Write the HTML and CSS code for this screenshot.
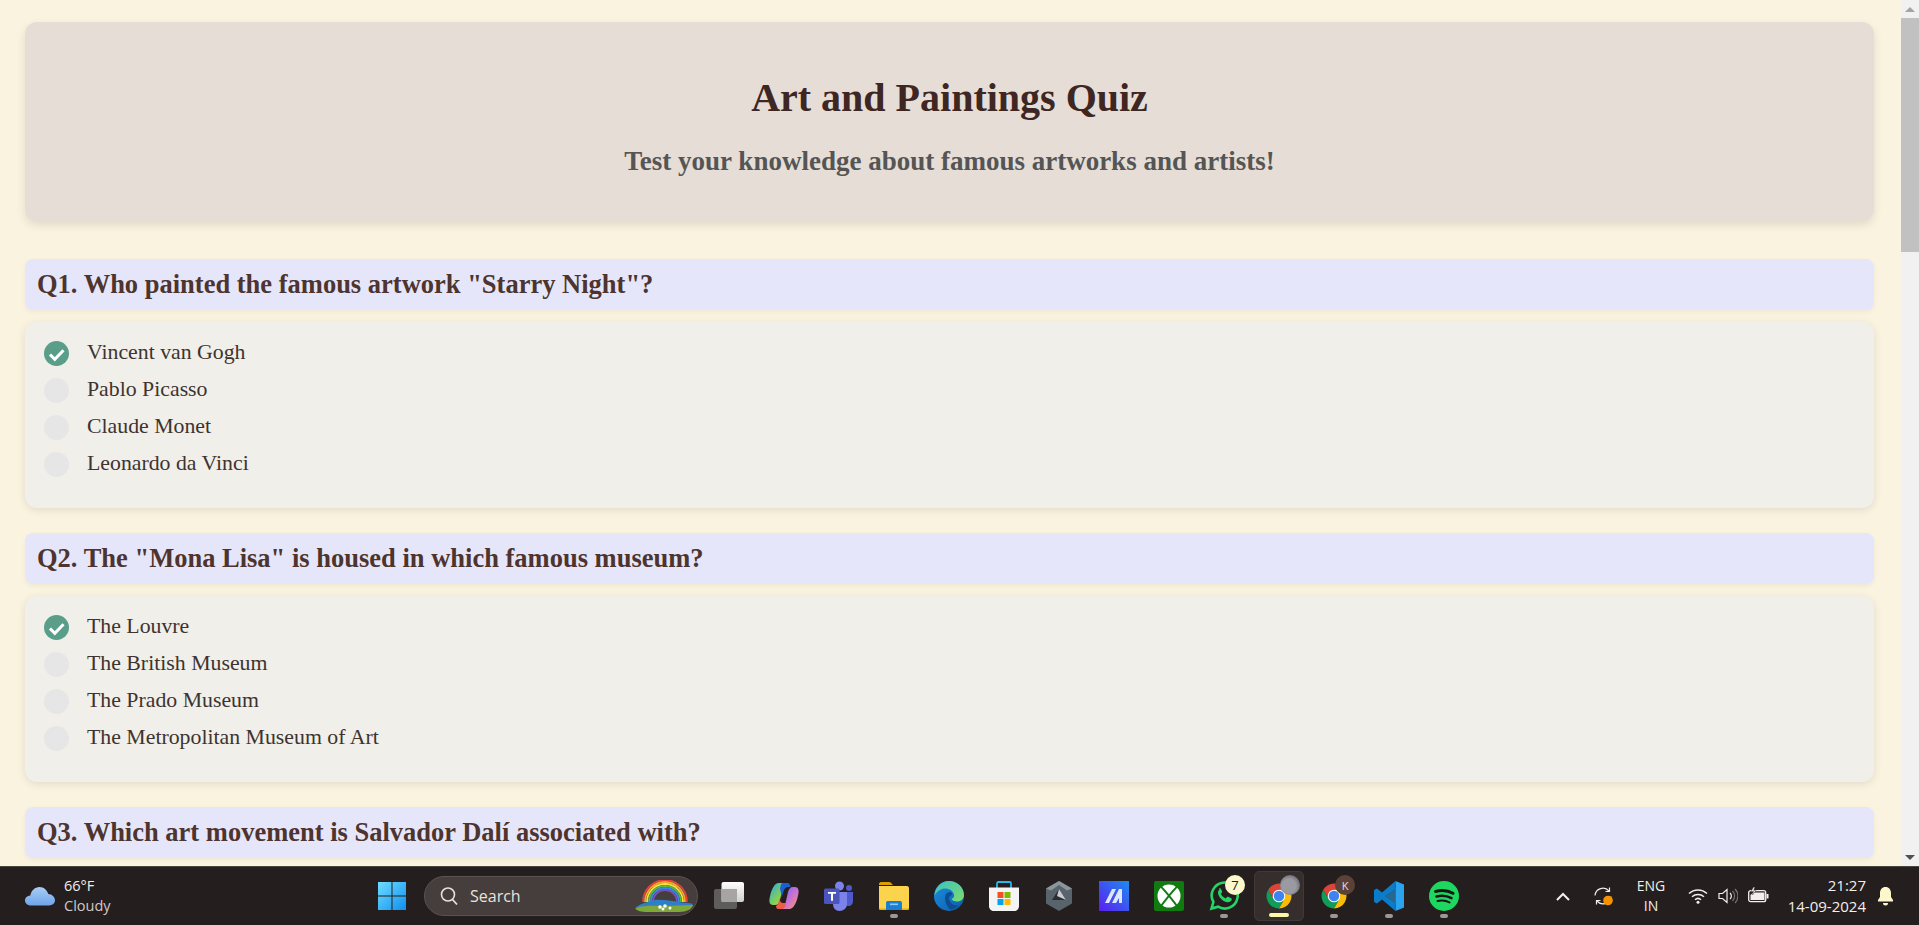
FILE: index.html
```html
<!DOCTYPE html>
<html lang="en">
<head>
    <meta charset="UTF-8">
    <meta name="viewport" content="width=device-width, initial-scale=1.0">
    <title>Art and Paintings Quiz</title>
    <link rel="stylesheet" href="styles.css">
</head>
<body>
    <svg class="defs" width="0" height="0">
        <symbol id="chrome" viewBox="0 0 48 48">
            <circle cx="24" cy="24" r="11" fill="#fff"/>
            <path fill="#db4437" d="M6.68 14A20 20 0 0 1 41.32 14H24A10 10 0 0 0 15.34 29Z"/>
            <path fill="#0f9d58" d="M6.68 14L15.34 29A10 10 0 0 0 32.66 29L24 44A20 20 0 0 1 6.68 14Z"/>
            <path fill="#fbbc05" d="M41.32 14H24A10 10 0 0 1 32.66 29L24 44A20 20 0 0 0 41.32 14Z"/>
            <circle cx="24" cy="24" r="8.4" fill="#3f83f1"/>
        </symbol>
    </svg>

    <div class="window">
        <main class="page">
            <header class="quiz-header">
                <h1>Art and Paintings Quiz</h1>
                <p>Test your knowledge about famous artworks and artists!</p>
            </header>

            <section class="question">
                <h2>Q1. Who painted the famous artwork "Starry Night"?</h2>
                <ul class="options">
                    <li><span class="radio checked"><svg viewBox="0 0 25 25"><path d="M6 13.500l4.800 4.800 8.700-9" fill="none" stroke="#fff" stroke-width="3"/></svg></span>Vincent van Gogh</li>
                    <li><span class="radio"></span>Pablo Picasso</li>
                    <li><span class="radio"></span>Claude Monet</li>
                    <li><span class="radio"></span>Leonardo da Vinci</li>
                </ul>
            </section>

            <section class="question">
                <h2>Q2. The "Mona Lisa" is housed in which famous museum?</h2>
                <ul class="options">
                    <li><span class="radio checked"><svg viewBox="0 0 25 25"><path d="M6 13.500l4.800 4.800 8.700-9" fill="none" stroke="#fff" stroke-width="3"/></svg></span>The Louvre</li>
                    <li><span class="radio"></span>The British Museum</li>
                    <li><span class="radio"></span>The Prado Museum</li>
                    <li><span class="radio"></span>The Metropolitan Museum of Art</li>
                </ul>
            </section>

            <section class="question">
                <h2>Q3. Which art movement is Salvador Dalí associated with?</h2>
            </section>
        </main>

        <div class="scrollbar">
            <span class="arrow up"></span>
            <span class="thumb"></span>
            <span class="track"></span>
            <span class="arrow down"></span>
        </div>
    </div>

    <footer class="taskbar">
        <div class="weather">
            <svg class="cloud" viewBox="0 0 30 20">
                <defs><linearGradient id="cloudFill" x1="0" y1="0" x2="0" y2="1"><stop offset="0" stop-color="#a9cdf6"/><stop offset="1" stop-color="#6ea4e8"/></linearGradient></defs>
                <path fill="url(#cloudFill)" d="M6 19.5C2.500 19.500 0 17.300 0 14.500 0 11.700 2.300 9.600 5.300 9.500 6.300 4.500 10 1 14.500 1 18.700 1 22 3.800 23.300 8 27 8.200 30 11 30 14.300 30 17.300 27.500 19.500 24 19.500Z"/>
            </svg>
            <div class="weather-text">
                <span>66°F</span>
                <span class="dim">Cloudy</span>
            </div>
        </div>

        <div class="apps">
            <div class="slot">
                <svg class="icon" viewBox="0 0 30 30">
                    <defs><linearGradient id="winFill" x1="0" y1="0" x2="1" y2="1"><stop offset="0" stop-color="#6fdcff"/><stop offset="1" stop-color="#0f8fee"/></linearGradient></defs>
                    <path fill="url(#winFill)" d="M1 1h13.500v13.500H1zM15.500 1H29v13.500H15.500zM1 15.500h13.500V29H1zM15.500 15.500H29V29H15.500z"/>
                </svg>
            </div>

            <div class="search">
                <svg class="search-icon" viewBox="0 0 20 20"><circle cx="9" cy="8.500" r="6.500" fill="none" stroke="#e6e2df" stroke-width="1.600"/><path d="M13.500 13.500l4.500 5" stroke="#e6e2df" stroke-width="1.800"/></svg>
                <span>Search</span>
                <svg class="rainbow" viewBox="0 0 60 32">
                    <g fill="none" stroke-width="1.800">
                        <path stroke="#e5403a" d="M9 22A19 19 0 0 1 53 22"/>
                        <path stroke="#f4a62a" d="M11 22A17 17 0 0 1 51 22"/>
                        <path stroke="#f7e03c" d="M13 22A15 15 0 0 1 49 22"/>
                        <path stroke="#55b947" d="M15 22A13 13 0 0 1 47 22"/>
                        <path stroke="#3a8be0" d="M17 22A11 11 0 0 1 45 22"/>
                        <path stroke="#7c4fc4" d="M19 22A9 9 0 0 1 43 22"/>
                    </g>
                    <path fill="#2f7fc8" d="M2 27C8 23 14 22 20 20c8-1 18 1 25 2 5 .5 10 1 14 2l-2 3H4z"/>
                    <path fill="#7fa83a" d="M1 28c10-3 22-2 30-2 10 0 20-1 28-1-1 4-6 7-14 7H14C7 32 3 31 1 28z"/>
                    <circle cx="26" cy="27" r="1.800" fill="#fff"/><circle cx="31" cy="26" r="1.800" fill="#fff"/><circle cx="29" cy="29" r="1.500" fill="#fff"/><circle cx="36" cy="28" r="1.500" fill="#fff"/>
                </svg>
            </div>

            <div class="slot">
                <svg class="icon" viewBox="0 0 30 30">
                    <defs><linearGradient id="tvBack" x1="0" y1="0" x2="0" y2="1"><stop offset="0" stop-color="#fff"/><stop offset="1" stop-color="#cfcfcf"/></linearGradient></defs>
                    <rect x="0" y="8" width="23" height="20" rx="2" fill="#5f5d5c"/>
                    <rect x="7.500" y="1" width="22.500" height="20" rx="2" fill="url(#tvBack)"/>
                    <rect x="7.500" y="8" width="15.500" height="13" fill="#a6a5a4"/>
                </svg>
            </div>

            <div class="slot">
                <svg class="icon" viewBox="0 0 30 30">
                    <defs>
                        <linearGradient id="copA" x1="0" y1="0" x2="1" y2="1"><stop offset="0" stop-color="#2ba7e8"/><stop offset=".55" stop-color="#7dcf5a"/><stop offset="1" stop-color="#f3c93c"/></linearGradient>
                        <linearGradient id="copB" x1="0" y1="0" x2="1" y2="1"><stop offset="0" stop-color="#5a6fe8"/><stop offset=".5" stop-color="#c86fd6"/><stop offset="1" stop-color="#f79a6b"/></linearGradient>
                    </defs>
                    <path fill="url(#copA)" d="M9 2h9c-3 1-4 4-5 8l-2 9c-1 3-2 5-5 5H4C1 24 0 21 .500 18 1.500 12 4 3 9 2z"/>
                    <path fill="url(#copB)" d="M21 28h-9c3-1 4-4 5-8l2-9c1-3 2-5 5-5h2c3 0 4 3 3.500 6-1 6-3.500 15-8.500 16z"/>
                    <path fill="#1b5fd0" d="M13 2h6c1 0 2 1.500 2.500 4H19c-3 0-4 3-5 6l-1.500 5c0-5-1-7-1.500-9 .5-3 1-5 2-6z"/>
                    <path fill="#ef5a4a" d="M10 17c1 3 2 5 4 5h3c-1 4-2 6-5 6H9c-1 0-2-1-2-3 2-1 3-4 3-8z"/>
                </svg>
            </div>

            <div class="slot">
                <svg class="icon" viewBox="0 0 30 30">
                    <circle cx="15.500" cy="5" r="4.500" fill="#7b83eb"/>
                    <circle cx="25" cy="7" r="3" fill="#5059c9"/>
                    <path fill="#5059c9" d="M21 11h8v9c0 3-2 5-4.500 5-1.500 0-2.500-.5-3.500-1.500z"/>
                    <path fill="#7b83eb" d="M9 11h14v12c0 4-3.500 7-7.500 7S9 27 9 23z"/>
                    <rect x="0" y="7.500" width="15.500" height="15.500" rx="1.500" fill="#4b53bc"/>
                    <path fill="#fff" d="M4 11h8v1.800H9v7H7v-7H4z"/>
                </svg>
            </div>

            <div class="slot running">
                <svg class="icon" viewBox="0 0 30 30">
                    <path fill="#d9a000" d="M0 3c0-1 .8-2 2-2h8c1 0 2 .5 3 2l1 1h-14z"/>
                    <path fill="#fcd34d" d="M0 5h28c1 0 2 1 2 2v20c0 1-1 2-2 2H2c-1 0-2-1-2-2z"/>
                    <path fill="#e8ab10" d="M0 27.500h30V28c0 .6-1 1-2 1H2c-1 0-2-.4-2-1z"/>
                    <path fill="#1a7fd4" d="M7 22c0-1.500 1-2 2-2h12c1 0 2 .5 2 2v7H7z"/>
                    <rect x="11" y="22.500" width="8" height="1.600" fill="#8ccbf5"/>
                </svg>
            </div>

            <div class="slot">
                <svg class="icon" viewBox="0 0 30 30">
                    <defs>
                        <linearGradient id="edgeTop" x1="0" y1="0" x2="1" y2="1"><stop offset="0" stop-color="#3bc1c4"/><stop offset="1" stop-color="#7ddc6a"/></linearGradient>
                        <linearGradient id="edgeBlue" x1="0" y1="0" x2="1" y2="1"><stop offset="0" stop-color="#1d8ee0"/><stop offset="1" stop-color="#0c5cab"/></linearGradient>
                    </defs>
                    <circle cx="15" cy="15" r="15" fill="url(#edgeBlue)"/>
                    <path fill="url(#edgeTop)" d="M15 0c8.500 0 15 6.500 15 14 0 4-3 6.500-7 6.500-2.500 0-5-1-5.500-2.500 2-.8 3-2.500 2.500-4.500C19 9 13 6.500 8 8 4 9.500 1.500 12 .500 15 1 6.500 7 0 15 0z"/>
                    <path fill="#0b4f92" d="M11 17c0-4 2.500-6 5-6 1.700 0 2.500 1.500 1.800 3-2 .5-3.300 2.500-2.300 5.500 1.300 3.500 5.500 5.500 9.500 5-2.500 2.500-6 4-9 4-3-3-5-7-5-11.500z"/>
                </svg>
            </div>

            <div class="slot">
                <svg class="icon" viewBox="0 0 30 30">
                    <path fill="none" stroke="#2bb5e8" stroke-width="1.800" d="M8 8V2.500c0-.8.500-1.500 1.200-1.500h11.600c.7 0 1.200.7 1.200 1.500V8"/>
                    <path fill="#f4f4f4" d="M0 6.500h30V25c0 2.800-2 5-4.500 5h-21C2 30 0 27.800 0 25z"/>
                    <rect x="8.500" y="11" width="6" height="6" fill="#f25022"/>
                    <rect x="15.500" y="11" width="6" height="6" fill="#7fba00"/>
                    <rect x="8.500" y="18" width="6" height="6" fill="#00a4ef"/>
                    <rect x="15.500" y="18" width="6" height="6" fill="#ffb900"/>
                </svg>
            </div>

            <div class="slot">
                <svg class="icon" viewBox="0 0 30 30">
                    <path fill="#59636b" d="M15 0l13 7.500v15L15 30 2 22.500v-15z"/>
                    <path fill="#8b959c" d="M15 0l13 7.500-5 2L15 4l-8 5.500-5-2z"/>
                    <path fill="#2a2e32" d="M15 8l7 11H8z"/>
                    <path fill="#c6ccd0" d="M15 8l7 11-9-4z"/>
                </svg>
            </div>

            <div class="slot">
                <svg class="icon" viewBox="0 0 30 30">
                    <defs><linearGradient id="maFill" x1="0" y1="1" x2="1" y2="0"><stop offset="0" stop-color="#5a1ef0"/><stop offset="1" stop-color="#1e8cf0"/></linearGradient></defs>
                    <rect width="30" height="30" fill="url(#maFill)"/>
                    <path fill="#dfe6ff" d="M6 22l7-14h4l-7 14zM13 22l7-14h3v14h-3v-5l-3 5z"/>
                </svg>
            </div>

            <div class="slot">
                <svg class="icon" viewBox="0 0 30 30">
                    <rect width="30" height="30" rx="2" fill="#107c10"/>
                    <circle cx="15" cy="15" r="11.500" fill="#fff"/>
                    <path stroke="#107c10" stroke-width="2" fill="none" d="M5 4C10 8 20 21 24.500 27M25 4C20 8 10 21 5.500 27"/>
                </svg>
            </div>

            <div class="slot running">
                <svg class="icon" viewBox="0 0 30 30">
                    <path fill="none" stroke="#25d366" stroke-width="2.600" d="M2.500 27.500l1.900-6.500A13 13 0 1 1 9 25.700z"/>
                    <path fill="#25d366" d="M10.500 8.500c-1.500 1-2 3-1 5.500 1.500 3.500 4 5.800 7.500 7 2.500.7 4.500 0 5.500-1.700.5-1 .3-1.700-.3-2l-3-1.500c-.6-.2-1-.1-1.400.4l-1 1.200c-2.500-1-4-2.500-5-4.700l1-1c.4-.5.5-1 .2-1.500l-1.200-2.500c-.4-.6-1-.6-1.800-.2z"/>
                </svg>
                <span class="badge note">7</span>
            </div>

            <div class="slot active">
                <svg class="icon" viewBox="0 0 48 48"><use href="#chrome" width="48" height="48"/></svg>
                <span class="badge avatar photo"></span>
            </div>

            <div class="slot running">
                <svg class="icon" viewBox="0 0 48 48"><use href="#chrome" width="48" height="48"/></svg>
                <span class="badge avatar">K</span>
            </div>

            <div class="slot running">
                <svg class="icon" viewBox="0 0 30 30">
                    <path fill="#2aa4ef" d="M21.500 0L30 3.500v23L21.500 30z"/>
                    <path fill="#0a7cc9" d="M21.500 0v8.500L11.500 15l10 7v8L8 18.500 3 22.500 0 21V9l3-1.500 5 4z"/>
                    <path fill="#2aa4ef" opacity=".55" d="M21.500 8.500L11.500 15l10 7z"/>
                </svg>
            </div>

            <div class="slot running">
                <svg class="icon" viewBox="0 0 30 30">
                    <circle cx="15" cy="15" r="15" fill="#1ed760"/>
                    <g fill="none" stroke="#1a1414" stroke-linecap="round">
                        <path stroke-width="3" d="M6.500 10.500c6-1.500 12.500-1 17.500 1.800"/>
                        <path stroke-width="2.500" d="M7.500 15.500c5-1.200 10.500-.8 15 1.700"/>
                        <path stroke-width="2" d="M8.500 20c4-.9 8.500-.6 12 1.400"/>
                    </g>
                </svg>
            </div>
        </div>

        <div class="tray">
            <svg class="caret" viewBox="0 0 14 9"><path d="M1 8l6-6 6 6" fill="none" stroke="#f2efec" stroke-width="2"/></svg>
            <div class="sync">
                <svg viewBox="0 0 20 20"><g fill="none" stroke="#efece9" stroke-width="1.200"><path d="M2 9.500A8 8 0 0 1 16 5"/><path d="M16.500 1.500V5.500H12.500"/><path d="M18 10.500A8 8 0 0 1 4 15"/><path d="M3.500 18.500V14.500H7.500"/></g><circle cx="15" cy="14.500" r="4.800" fill="#f59300"/></svg>
            </div>
            <div class="lang"><span>ENG</span><span>IN</span></div>
            <svg class="wifi" viewBox="0 0 20 16"><g fill="none" stroke="#f2efec" stroke-width="1.500"><path d="M1 5.500a13 13 0 0 1 18 0"/><path d="M4 8.700a9 9 0 0 1 12 0"/><path d="M7 11.700a4.500 4.500 0 0 1 6 0"/></g><circle cx="10" cy="14.200" r="1.500" fill="#f2efec"/></svg>
            <svg class="volume" viewBox="0 0 20 16"><path d="M1 5.500h3.500L9 1.500v13l-4.500-4H1z" fill="none" stroke="#f2efec" stroke-width="1.200"/><path d="M12 5a4 4 0 0 1 0 6" fill="none" stroke="#f2efec" stroke-width="1.200"/><path d="M14.500 3a7 7 0 0 1 0 10M17 1a10 10 0 0 1 0 14" fill="none" stroke="#77716e" stroke-width="1.200"/></svg>
            <svg class="battery" viewBox="0 0 21 16"><rect x=".7" y="3.700" width="17" height="11" rx="2" fill="#2a2322" stroke="#f2efec" stroke-width="1.300"/><path d="M2.500 13V8l3-2.500h11V13z" fill="#f2efec"/><rect x="18.500" y="7" width="2" height="4.500" fill="#f2efec"/><path d="M5.500 0L3 4.500h2.500L4.500 8 8 3.500H5.800L6.800 0z" fill="#f2efec" stroke="#2a2322" stroke-width=".4"/></svg>
            <div class="clock"><span>21:27</span><span>14-09-2024</span></div>
            <svg class="bell" viewBox="0 0 17 20"><path fill="#fdf8cc" d="M8.500 1C5 1 3 3.700 3 7v4L1 14v1.500h15V14l-2-3V7c0-3.300-2-6-5.500-6z"/><path fill="#fdf8cc" d="M6 17h5a2.500 2.500 0 0 1-5 0z"/></svg>
        </div>
    </footer>
</body>
</html>
```

FILE: styles.css
```css
* {
    box-sizing: border-box;
}
html, body {
    height: 100%;
}
body {
    margin: 0;
    display: flex;
    flex-direction: column;
    overflow: hidden;
    font-family: "Liberation Serif", Georgia, serif;
    background-color: #faf3e0;
}
.defs {
    position: absolute;
}
.window {
    flex: 1;
    min-height: 0;
    display: flex;
}
.page {
    flex: 1;
    min-width: 0;
    overflow: hidden;
    padding: 22px 27px 0 25px;
}

/* cabecalho */
.quiz-header {
    height: 199px;
    padding-top: 51px;
    margin-bottom: 38px;
    text-align: center;
    background-color: #e6ddd6;
    border-radius: 12px;
    box-shadow: 0 4px 10px rgba(0, 0, 0, 0.1);
}
.quiz-header h1 {
    margin: 0;
    font-size: 40px;
    line-height: 50px;
    color: #3e2723;
}
.quiz-header p {
    margin: 23px 0 0;
    font-size: 27px;
    font-weight: bold;
    line-height: 30px;
    color: #555;
}

/* perguntas */
.question {
    margin-bottom: 25px;
}
.question h2 {
    margin: 0 0 12px;
    height: 51px;
    padding-left: 12px;
    font-size: 26.5px;
    line-height: 50px;
    color: #4e342e;
    background-color: #e6e6fa;
    border-radius: 8px;
    box-shadow: 0 2px 5px rgba(0, 0, 0, 0.05);
}
.options {
    list-style: none;
    margin: 0;
    height: 186px;
    padding: 13px 19px 0;
    background-color: #f0efe9;
    border-radius: 12px;
    box-shadow: 0 2px 8px rgba(0, 0, 0, 0.1);
}
.options li {
    display: flex;
    align-items: center;
    height: 37px;
    padding-bottom: 2px;
    font-size: 21.8px;
    color: #3e3330;
}
.radio {
    width: 25px;
    height: 25px;
    margin-right: 18px;
    margin-top: 2px;
    border-radius: 50%;
    background-color: #e6e6e6;
}
.radio svg {
    display: block;
}
.radio.checked {
    background-color: #5a9e8a;
}

/* barra de rolagem */
.scrollbar {
    width: 18px;
    display: flex;
    flex-direction: column;
    background-color: #f1f1f1;
}
.arrow {
    height: 18px;
    display: flex;
    align-items: center;
    justify-content: center;
}
.arrow::before {
    content: "";
    border-left: 5px solid transparent;
    border-right: 5px solid transparent;
}
.arrow.up::before {
    border-bottom: 5px solid #a3a3a3;
}
.arrow.down::before {
    border-top: 5px solid #505050;
}
.thumb {
    height: 234px;
    background-color: #c1c1c1;
}
.track {
    flex: 1;
}

/* barra de tarefas */
.taskbar {
    height: 59px;
    flex-shrink: 0;
    display: flex;
    align-items: center;
    background-color: #251e1e;
    border-top: 1px solid #4a4442;
    font-family: "Open Sans", "Noto Sans", sans-serif;
    color: #f2efec;
}
.weather {
    width: 367px;
    padding-left: 25px;
    display: flex;
    align-items: center;
    gap: 9px;
}
.cloud {
    width: 30px;
    height: 20px;
}
.weather-text {
    display: flex;
    flex-direction: column;
    font-size: 14.5px;
    line-height: 20px;
}
.dim {
    color: #cfcac7;
}
.apps {
    display: flex;
    align-items: center;
    gap: 5px;
}
.slot {
    position: relative;
    width: 50px;
    height: 50px;
    display: flex;
    align-items: center;
    justify-content: center;
    border-radius: 5px;
}
.icon {
    width: 30px;
    height: 30px;
}
.running::after, .active::after {
    content: "";
    position: absolute;
    bottom: 3px;
    left: 50%;
    width: 8px;
    height: 4px;
    margin-left: -4px;
    border-radius: 2px;
    background-color: #9d9896;
}
.active {
    background-color: #352e2d;
    border: 1px solid #3f3937;
}
.active::after {
    width: 20px;
    margin-left: -10px;
    background-color: #fdf8a8;
}
.badge {
    position: absolute;
    top: 4px;
    right: 4px;
    width: 20px;
    height: 20px;
    border-radius: 50%;
    display: flex;
    align-items: center;
    justify-content: center;
    font-size: 13px;
}
.note {
    background-color: #fdf8cc;
    color: #222;
}
.avatar {
    background-color: #5b4238;
    color: #e8dfd9;
    font-size: 11px;
}
.photo {
    top: 3px;
    right: 3px;
    background: radial-gradient(circle at 45% 55%, #9a9aa2 0 45%, #45434a 100%);
}
.search {
    width: 274px;
    height: 40px;
    margin: 0 1px 0 2px;
    padding: 0 3px 0 14px;
    display: flex;
    align-items: center;
    gap: 11px;
    background-color: #463e3d;
    border: 1px solid #5a5351;
    border-radius: 20px;
    font-size: 16px;
    color: #e6e2df;
}
.search-icon {
    width: 20px;
    height: 20px;
}
.rainbow {
    width: 60px;
    height: 32px;
    margin-left: auto;
}
.tray {
    flex: 1;
    display: flex;
    align-items: center;
    font-size: 14px;
    white-space: nowrap;
}
.caret {
    width: 14px;
    height: 9px;
    margin-left: 87px;
}
.sync {
    width: 20px;
    height: 20px;
    margin-left: 23px;
}
.sync svg {
    display: block;
}
.lang {
    width: 36px;
    margin-left: 20px;
    display: flex;
    flex-direction: column;
    align-items: center;
    line-height: 20px;
}
.wifi, .volume {
    width: 20px;
    height: 16px;
}
.wifi {
    margin-left: 19px;
}
.volume {
    margin-left: 10px;
}
.battery {
    width: 21px;
    height: 16px;
    margin-left: 10px;
    margin-top: -3px;
}
.clock {
    margin-left: auto;
    display: flex;
    flex-direction: column;
    align-items: flex-end;
    line-height: 21px;
    font-size: 15px;
}
.bell {
    flex-shrink: 0;
    width: 17px;
    height: 20px;
    margin: 0 25px 0 11px;
}
```
